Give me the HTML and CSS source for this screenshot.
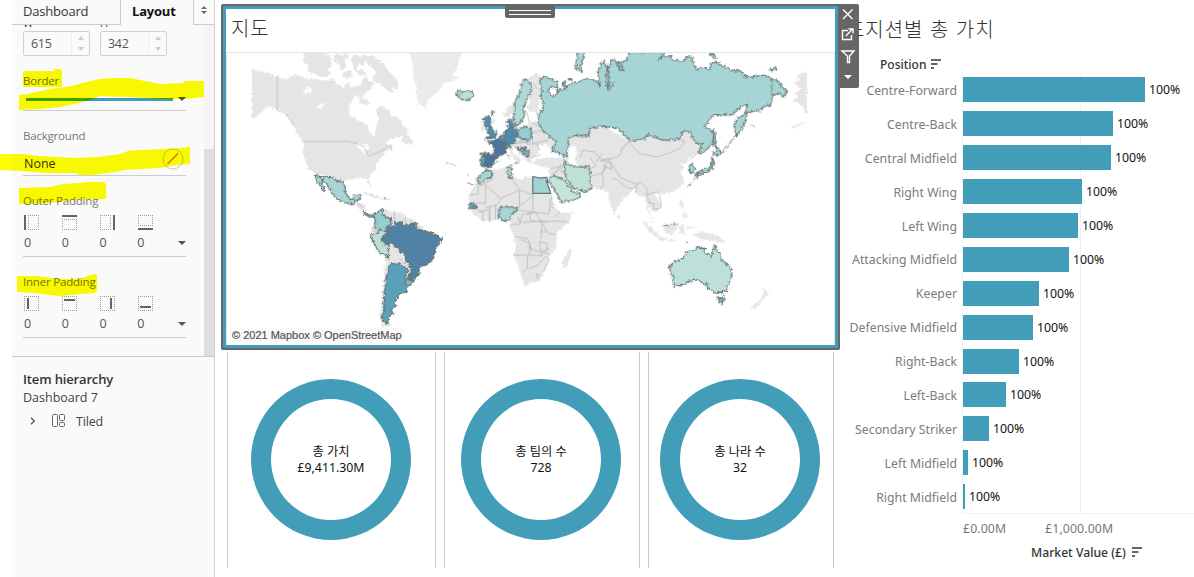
FILE: index.html
```html
<!DOCTYPE html>
<html lang="ko">
<head>
<meta charset="utf-8">
<title>Dashboard 7</title>
<link rel="stylesheet" href="styles.css">
</head>
<body>
<div class="app">
  <aside class="panel">
    <nav class="tabs">
      <div class="tab">Dashboard</div>
      <div class="tab active">Layout</div>
      <div class="tab-toggle"><svg width="8" height="10" viewBox="0 0 8 10"><path d="M1 4L4 1l3 3zM1 6l3 3 3-3z"/></svg></div>
    </nav>
    <div class="scroller">
      <div class="props">
        <div class="size-labels"><span>W</span><span>H</span></div>
        <div class="sizes">
          <div class="num"><span>615</span><div class="steps"><i class="up"></i><i class="down"></i></div></div>
          <div class="num"><span>342</span><div class="steps"><i class="up"></i><i class="down"></i></div></div>
        </div>
        <div class="label border-label">Border</div>
        <div class="field border-field"><b class="swatch"></b><i class="caret"></i></div>
        <div class="label bg-label">Background</div>
        <div class="field bg-field"><span>None</span><svg width="22" height="22" viewBox="0 0 22 22"><circle cx="11" cy="11" r="10" fill="none" stroke="#c9c9c9"/><path d="M5.500 16L16 5.500" stroke="#e2703a" stroke-width="1.500"/></svg></div>
        <div class="label outer-label">Outer Padding</div>
        <div class="pads">
          <svg width="16" height="16"><path class="dots" d="M4 .5h11M4 14.500h11M4.500 0v15M14.500 0v15"/><path class="thick" d="M1 0v15"/></svg>
          <svg width="16" height="16"><path class="dots" d="M0 4.500h15M0 14.500h15M.5 4v11M14.500 4v11"/><path class="thick" d="M0 1h15"/></svg>
          <svg width="16" height="16"><path class="dots" d="M0 .5h11M0 14.500h11M.5 0v15M10.500 0v15"/><path class="thick" d="M14 0v15"/></svg>
          <svg width="16" height="16"><path class="dots" d="M0 .5h15M0 10.500h15M.5 0v11M14.500 0v11"/><path class="thick" d="M0 14h15"/></svg>
        </div>
        <div class="field pad-field"><span>0</span><span>0</span><span>0</span><span>0</span><i class="caret"></i></div>
        <div class="label inner-label">Inner Padding</div>
        <div class="pads">
          <svg width="16" height="16"><path class="dots" d="M0 .5h15M0 14.500h15M.5 0v15M14.500 0v15"/><path class="thick" d="M4 2v11"/></svg>
          <svg width="16" height="16"><path class="dots" d="M0 .5h15M0 14.500h15M.5 0v15M14.500 0v15"/><path class="thick" d="M2 4h11"/></svg>
          <svg width="16" height="16"><path class="dots" d="M0 .5h15M0 14.500h15M.5 0v15M14.500 0v15"/><path class="thick" d="M11 2v11"/></svg>
          <svg width="16" height="16"><path class="dots" d="M0 .5h15M0 14.500h15M.5 0v15M14.500 0v15"/><path class="thick" d="M2 11h11"/></svg>
        </div>
        <div class="field pad-field"><span>0</span><span>0</span><span>0</span><span>0</span><i class="caret"></i></div>
      </div>
      <div class="track"><div class="thumb"></div></div>
    </div>
    <section class="hierarchy">
      <h2>Item hierarchy</h2>
      <p>Dashboard 7</p>
      <div class="node">
        <svg width="6" height="8" viewBox="0 0 6 8"><path d="M1 .7L4.300 4 1 7.300" fill="none" stroke="#555" stroke-width="1.300"/></svg>
        <svg class="tile-icon" width="14" height="14" viewBox="0 0 14 14" fill="none" stroke="#666"><rect x=".5" y=".5" width="5" height="12" rx="1"/><rect x="7.500" y=".5" width="5" height="6" rx="1"/><rect x="7.500" y="8.500" width="5" height="4" rx="1"/></svg>
        <span>Tiled</span>
      </div>
    </section>
  </aside>

  <main class="canvas">
    <section class="map-card">
      <h1>지도</h1>
      <div class="map">
      <svg class="world" viewBox="227 53 608 292" width="608" height="292">
        <defs>
          <!-- Roughens the outlines so that coasts look natural -->
          <filter id="coast" filterUnits="userSpaceOnUse" x="227" y="53" width="608" height="292" color-interpolation-filters="sRGB">
            <feTurbulence type="fractalNoise" baseFrequency=".35" numOctaves="2" seed="4" result="n"/>
            <feDisplacementMap in="SourceGraphic" in2="n" scale="5" xChannelSelector="R" yChannelSelector="G"/>
          </filter>
        </defs>
        <g filter="url(#coast)">
        <!-- North America and the Arctic -->
        <g class="land" transform="translate(220 0) scale(.33333)">
          <path d="M96 208L130 214 172 228 200 238 222 224 240 226 255 235 290 238 312 243 340 234 348 252 368 258 385 246 395 262 420 254 430 238 440 224 445 240 462 245 456 262 440 276 425 290 405 288 390 312 388 335 396 350 420 362 445 376 448 396 463 410 466 382 478 362 468 328 485 318 508 330 515 348 534 350 550 375 565 392 562 402 540 410 512 415 492 432 515 433 520 443 498 455 486 472 468 488 470 506 452 524 448 540 454 556 450 562 440 535 415 532 405 536 375 540 372 548 340 545 330 530 286 522 268 508 256 484 250 462 252 425 238 412 224 380 205 352 188 332 172 328 150 318 132 324 120 340 96 362Z"/>
          <path d="M252 150L300 150 330 168 338 195 322 206 335 222 308 232 285 222 262 212 268 195 250 188ZM345 160l20 5 12-7 10 10-14 12 10 20-20 10-8-20-14-6zM395 170l14-10 12 10 10-6 5 15-8 18-12-6-6 20 18-2 12 14-20 4-18-20zM430 166l30-2 14 15 18 12 15 22 20 18 12 25-10 12-14-10 8 20-20-5-22-22-18-5-8-14 14-10-10-20-22-15zM420 290l20 8 14 14-20 2-16-8zM560 400l20 20-6 15-20-5-12-6zM370 215l20-6 10 18-14 10-18-6z"/>
          <path class="ice" d="M567 150L580 188 580 230 592 262 588 280 600 315 618 326 626 298 640 285 660 270 672 250 718 236 698 222 715 205 718 182 730 150Z"/>
          <path class="lake" d="M248 270l15-8 18 6-8 10-20 3zM286 322l20-12 12 2-20 14zM415 428l30 8 6 6-14 6 4 20-10-12-18-15z"/>
        </g>
        <!-- Central and South America -->
        <g class="land" transform="translate(220 170) scale(.33333)">
          <path d="M400 103L412 96 438 106 434 124 462 138 452 140 428 124ZM435 66l30 8 16 8-12 4-38-14zM488 84l24 1-2 6-24-2zM485 122L500 120 545 128 560 142 585 152 600 160 612 180 520 290 506 262 480 190 456 190 455 174 468 158ZM498 260L506 262 520 284 502 330 494 430 488 440 492 456 510 470 484 470 482 430 488 360ZM506 230L520 222 572 285 572 306 560 302 556 285 510 282Z"/>
        </g>
        <!-- Europe and Africa -->
        <g class="land" transform="translate(440 60) scale(.33333)">
          <path d="M192 162L205 140 220 132 248 75 262 58 285 38 302 45 302 80 315 100 300 115 295 175 308 200 262 196 278 184 294 180 292 160 272 155 262 148 270 120 270 100 260 130 245 165 232 200 220 160 205 172 194 170ZM128 172L165 175 160 195 124 215ZM205 195L230 200 260 195 300 190 318 210 350 238 345 260 330 265 320 250 295 262 300 278 278 295 272 312 258 300 240 280 225 262 215 265 232 285 244 300 232 310 222 292 205 268 180 280 160 275Z"/>
          <path d="M285 300L310 292 360 294 385 290 395 318 370 318 335 325 300 318 280 310Z"/>
          <path d="M328 325L395 310 395 360 376 362 342 346 330 352Z"/>
          <path d="M155 328L212 320 218 345 245 362 256 350 300 350 326 353 335 400 350 445 365 458 402 454 388 488 350 520 352 560 330 590 320 625 300 660 270 674 252 674 244 640 222 585 230 555 224 530 210 505 212 485 190 480 130 484 100 462 86 440 88 400 105 378 140 345Z"/>
          <path d="M392 565L398 570 384 622 370 626 368 605 382 580Z"/>
        </g>
        <!-- Asia and Oceania -->
        <g class="land" transform="translate(570 120) scale(.33333)">
          <path d="M0 58L25 45 65 30 100 14 135 38 182 62 240 46 330 56 350 30 382 65 400 72 384 100 358 118 350 132 330 126 345 146 332 156 344 175 336 198 320 210 300 218 278 222 262 214 254 222 278 252 262 276 248 268 238 258 244 290 256 310 248 304 232 262 228 232 205 226 196 205 160 240 144 262 136 286 122 250 115 215 100 210 62 202 20 185 0 175Z"/>
          <path class="lake" d="M0 80l18-6 5 30-8 10 12 28-27-4z"/>
          <path d="M145 282l8 6-2 8-6-4zM220 300l18 15 35 35-12 2-28-25zM262 350l58 10-2 4-54-6zM284 318l28-4 10-10 4 12-16 28-16-2-10-10zM332 320l14-10-4 14 8 20-18-4zM375 340l25-4 32 6 26 12 10 16-44-10-28-2-22-12zM332 235l12 20-4 14-12-16zM348 268l8 25-14-2zM352 320l28 2-2 4-26-2z"/>
        </g>
        <g class="land" transform="translate(530 0) scale(.33333)">
          <path d="M834 212L822 216 806 228 810 240 796 250 815 262 810 272 794 282 808 290 792 298 815 314 834 345ZM786 382l48-20-38 24z"/>
        </g>
        <g class="land" transform="translate(530 170) scale(.33333)">
          <path d="M704 350l5 12 12 3-16 20-26 32-12 0 8-14 22-16 8-20z"/>
        </g>
        </g>
        <!-- Borders between countries without data -->
        <g class="land" transform="translate(220 0) scale(.33333)">
          <path class="line" d="M172 228V330L196 338 210 358 224 380M247 424H385L412 430 432 440 446 468 480 455 512 435 515 452"/>
        </g>
        <g class="land" transform="translate(220 170) scale(.33333)">
          <path class="line" d="M524 126v40M556 140l2 30M574 148v20M540 265l30 38M508 230l-2 40M410 98l20 14M455 175l15 14"/>
        </g>
        <g class="land" transform="translate(440 60) scale(.33333)">
          <path class="line" d="M106 372h32v58H92M90 403h26v-24M138 376l47 40-14 20-33 6M160 332l-4 28-40 18M185 415l55-25-30-45M240 392v48l-8 10M240 390l40 15v-52M280 400v52l-18 14M236 442l44-34M106 444l24 14v26M120 456l30-8v36M150 440v44M168 436v44M210 440M235 450l45 6 48 6 8-52M235 470l8 22-34 2M242 488l8-26 38-4 20 30-4 50M225 530l40 6 12 40M270 458l4 25 50 2M300 486l46-3 36 2M250 488l58-6M308 490l18 30 24 4M302 515h22M222 585l86 2M244 540l28 10-4 36M264 588v38l-20 14M298 545l24 5 2 18-26 8-30-15M300 590l30-26M268 625l26-8 25-28 10 12-18 35M292 642l8 3-4 11-6-4zM302 545v30l28 8M326 425l14 20M345 470l16-12"/>
          <path class="line" d="M275 200l5 50 45-10M278 218l35-10M262 252l30-2 8 20M225 250l50-6M228 262l30 4M277 290l28-6M370 296l26 22M334 326l20-4 18-5M335 345l20-15 8-15M360 320l25 30M340 350l16-22 40 28M226 240l40 10"/>
          <path class="line" d="M282 72l12 14M262 155l8 34M278 190l26 7"/>
        </g>
        <g class="land" transform="translate(570 120) scale(.33333)">
          <path class="line" d="M32 112l8-22 35 6 18 20 22 5 36-14 8-20 20-24 15 22 20 16 50 10 36-12 32-14 15-20-15-6M182 62l-30 30M92 122l32 5 12 20 18 26 46 20-8 14-20-5-30-24-14-2M110 130l-12 30 5 30-8 18M60 170l40-12 12-20M95 122l24-8 8 34-28-14M200 193l12-8 20 18 4 20 32-8 6 28 2 20-24 6 2-18-18-4M205 190l-6 28M230 218l12 34M62 112l18 25-18 10M100 100l-20 25M384 100l-22 20"/>
        </g>
        <!-- Countries with data -->
        <g filter="url(#coast)">
        <g class="country" transform="translate(530 0) scale(.33333)">
          <path fill="#a7d5d6" d="M300 156L410 156 385 180 405 168 424 166 432 180 452 182 464 180 470 170 490 172 495 194 502 210 514 200 542 208 545 186 568 188 582 198 602 208 618 212 634 212 648 230 672 230 684 224 712 226 730 236 748 242 762 264 776 270 764 290 750 282 730 284 726 312 708 318 690 332 654 336 650 360 632 395 620 408 616 380 624 355 648 340 656 312 630 324 610 344 552 344 526 380 548 392 556 405 548 435 530 450 512 464 508 458 520 432 500 430 480 395 462 392 448 418 400 420 358 404 342 418 302 422 264 384 214 378 182 386 178 408 138 406 116 416 118 440 110 450 118 472 92 462 68 452 80 426 40 392 26 366 28 344 42 320 34 284 38 270 30 240 45 228 82 244 86 262 60 262 56 274 72 290 84 280 82 272 102 268 98 250 114 256 128 250 178 234 204 246 212 262 206 210 224 178 234 200 230 230 236 268 240 250 236 210 248 178 270 186 284 212 270 206 262 190 292 180Z"/>
          <path fill="#a7d5d6" d="M146 152L168 152 154 196 158 214 138 206 140 186ZM722 208l18-5-6 10zM542 160l8 14 12 0-10-14zM118 236l10 0-4 6zM100 250l8-6 2 22-8-4z"/>
          <path fill="#a7d5d6" d="M552 386l6 16 0 26 10 18-8-2-8-12zM552 456l14-4 16 4-16 12-12-4z"/>
          <path fill="#a5d8d3" d="M548 470l6 14-6 24-12 6-16 6-16 6 4-10 20-10 16-4 4-16zM502 516l8 6-6 10-6-8zM482 494l10-4 4 16-4 12-10 0-4-10z"/>
          <path class="trail" d="M570 464l32-34 22-32M662 374l14 8M500 530l-10 18-16 14M728 236v48M236 200l-2 60 6 10 16-28"/>
          <path fill="#bde1d6" d="M102 484l16 12 42 6 18-4 4 24 0 24 6 16-16 14-40-10-22-32z"/>
        </g>
        <g class="country" transform="translate(220 0) scale(.33333)">
          <path fill="#bde1dc" d="M713 275l10-6 2 10 20-8 14 4 4 12-12 10-14 4-14-4-6-10-8-4z"/>
          <path fill="#afdad8" d="M920 238l14 12 2 22-16 30-8 24 2 22-14 24-12 4-8-20 6-30 0-22 14-25 4-22 10-18z"/>
        </g>
        <g class="country" transform="translate(440 60) scale(.33333)">
          <path fill="#4f8db1" d="M132 174L148 168 154 184 148 190 160 208 172 220 166 232 136 238 150 226 140 214 150 204 132 195 138 184 128 180ZM156 156l6-6-4 16zM202 184l14-6 2 14 8 8-10 6-10-8z"/>
          <path fill="#4b739c" d="M178 232L202 244 198 262 200 278 180 286 162 280 164 260 145 246 160 246 164 238 172 240Z"/>
          <path fill="#5189ad" d="M198 212L212 202 228 206 234 222 230 232 224 250 204 254 196 240 196 224Z"/>
          <path fill="#4b739c" d="M124 280L146 280 180 288 164 300 162 312 152 322 136 322 130 316 136 290Z"/>
          <path fill="#5aaabc" d="M124 290h12l-4 28-8 0zM178 232l12-8 6 12-2 8zM198 258l12-2 4 6-14 4z"/>
          <path fill="#96cdd1" d="M234 208L256 200 272 204 276 224 270 242 246 238 236 228Z"/>
          <path fill="#72bcc4" d="M230 264l10 2 4 8 16 12-8-4-14-10zM256 262l10 8 2 18-6 4-8-12zM242 262l12 2 2 10z"/>
          <path fill="#a7d5d6" d="M118 370L112 358 124 342 140 330 154 332 160 345 154 352 138 358 124 370Z"/>
          <path fill="#bde1d6" d="M204 322l8-4 4 10-2 10 4 6-6 12-8-14z"/>
          <path fill="#a7d5d6" d="M182 440l50 2 0 8-16 14-6 16-16 4-18-14z"/>
          <path fill="#5aaabc" d="M88 434l12-6 12 16-12 2-12-4z"/>
          <path fill="#c3e6d8" d="M330 352L342 346 376 362 390 380 400 396 422 402 422 410 404 420 364 426 352 400 342 386 330 366Z"/>
          <path class="trail" d="M20 310l6-2M32 312l4 2M44 312l2 4M82 368l6 2 16 2M84 344l4 0M168 308l8-6M182 302l4-2M206 284l2 10M226 308l12 2M94 438l16 0"/>
        </g>
        <g class="country" transform="translate(220 170) scale(.33333)">
          <path fill="#a7d5d6" d="M284 14L300 20 334 20 352 34 362 32 376 50 376 70 392 88 402 88 404 74 424 74 418 90 405 94 400 104 378 98 350 86 338 72 328 52 308 28 306 38 316 60 312 64 296 40 290 32Z"/>
          <path fill="#96cdd1" d="M462 138L476 124 492 118 488 134 512 146 514 166 502 172 500 188 480 178 464 176 468 158ZM428 124l12 6 10 6 14-4-2 8-12 2-14-8z"/>
          <path fill="#bde1d6" d="M450 196L474 190 482 180 500 188 486 204 490 218 506 222 506 262 476 246 464 222Z"/>
          <path fill="#5182a5" d="M502 172L526 168 528 158 546 154 550 168 586 158 594 176 624 186 662 200 666 212 648 232 642 262 634 280 602 290 598 310 580 336 564 320 574 304 572 286 558 276 556 256 520 222 492 222 484 206 502 194Z"/>
          <path fill="#5aa0b8" d="M514 282L534 280 556 292 564 304 556 322 562 350 560 366 536 374 534 384 524 394 528 408 514 422 522 430 506 444 504 460 492 456 484 442 492 426 494 370 500 324 508 290Z"/>
          <path fill="#72bcc4" d="M562 322l18 14-4 10-16 0-4-10z"/>
          <path class="trail" d="M492 456l14 4 4 10M492 84h6"/>
        </g>
        <g class="country" transform="translate(530 170) scale(.33333)">
          <path fill="#bde1da" d="M420 288L436 276 464 262 468 252 484 240 494 244 504 230 528 236 524 246 546 258 556 226 564 244 572 248 574 264 590 280 606 296 608 316 600 340 592 362 560 370 544 360 532 350 536 338 524 344 508 330 480 334 466 342 434 350 430 320 424 308Z"/>
          <path fill="#72bcc4" d="M566 380l10 6 8-6 0 12-8 10-6-8z"/>
          <path class="trail" d="M402 168l30-6 6-10M432 154l10 12M470 216l8 2M526 340l8 14M562 370l20 2"/>
        </g>
        </g>
        <g class="country" transform="translate(440 60) scale(.33333)">
          <path fill="#9fd3d5" d="M280 350l20 4 22-2 4 16-6-6 14 38h-54z"/>
        </g>
      </svg>
      <div class="credit">© 2021 Mapbox © OpenStreetMap</div>
      </div>
      <div class="handle"></div>
    </section>
    <div class="toolbar">
      <svg width="21" height="84" viewBox="0 0 21 84" fill="none" stroke="#fff" stroke-width="1.400"><path d="M5 5.500l9.500 9.500M14.500 5.500l-9.500 9.500M10 26.500H4.500v9h9V31M8 32l6.500-7M10.500 25H15v4.500M4 47h12L11.500 52v6.500h-2V52z"/><path d="M6 71h8l-4 4z" fill="#fff" stroke="none"/></svg>
    </div>
    <div class="donuts">
      <div class="cell c1"><div class="ring"><span>총 가치</span><span>£9,411.30M</span></div></div>
      <div class="cell c2"><div class="ring"><span>총 팀의 수</span><span>728</span></div></div>
      <div class="cell c3"><div class="ring"><span>총 나라 수</span><span>32</span></div></div>
    </div>
  </main>

  <section class="chart">
    <h1>포지션별 총 가치</h1>
    <div class="head">Position<svg class="sort" width="10" height="10"><path d="M0 1h10M0 5h6.500M0 9h3"/></svg></div>
    <div class="plot">
      <div class="row"><label>Centre-Forward</label><b style="width:182px"></b><span>100%</span></div>
      <div class="row"><label>Centre-Back</label><b style="width:150px"></b><span>100%</span></div>
      <div class="row"><label>Central Midfield</label><b style="width:148px"></b><span>100%</span></div>
      <div class="row"><label>Right Wing</label><b style="width:119px"></b><span>100%</span></div>
      <div class="row"><label>Left Wing</label><b style="width:115px"></b><span>100%</span></div>
      <div class="row"><label>Attacking Midfield</label><b style="width:106px"></b><span>100%</span></div>
      <div class="row"><label>Keeper</label><b style="width:76px"></b><span>100%</span></div>
      <div class="row"><label>Defensive Midfield</label><b style="width:70px"></b><span>100%</span></div>
      <div class="row"><label>Right-Back</label><b style="width:56px"></b><span>100%</span></div>
      <div class="row"><label>Left-Back</label><b style="width:43px"></b><span>100%</span></div>
      <div class="row"><label>Secondary Striker</label><b style="width:26px"></b><span>100%</span></div>
      <div class="row"><label>Left Midfield</label><b style="width:5px"></b><span>100%</span></div>
      <div class="row"><label>Right Midfield</label><b style="width:2px"></b><span>100%</span></div>
    </div>
    <div class="ticks"><span>£0.00M</span><span>£1,000.00M</span></div>
    <div class="axis">Market Value (£)<svg class="sort" width="10" height="10"><path d="M0 1h10M0 5h6.500M0 9h3"/></svg></div>
  </section>

  <!-- Highlighter marks over the layout panel -->
  <svg class="marker" width="215" height="300" viewBox="0 0 215 300">
    <path d="M23 71H54V69H60L62 71V86L60 87H23Z"/>
    <path d="M19 95L28 94 50 89 72 86 82 83 100 79 113 78 130 78 140 80 160 84 183 83 184 81H204V97L185 99 160 99 130 97 100 96 90 100 75 104 60 107 40 109 19 110Z"/>
    <path d="M0 154H22L40 156 75 158 98 157 120 154 128 151 140 150 165 149 180 148 190 147V164L176 165 160 168 140 169 125 170 115 172 92 175H80L75 173 45 173 22 171 0 170Z"/>
    <path d="M19 188L50 187 62 184 80 183 88 182H104L106 184V199H80L65 201 50 203 19 204Z"/>
    <path d="M17 276H35L60 279 80 279 90 275 97 274V291L95 293 80 294 60 296 50 295 35 293 17 292Z"/>
  </svg>
</div>
</body>
</html>
```

FILE: styles.css
```css
* { box-sizing: border-box; }
body {
  margin: 0;
  background: #fff;
  font-family: "Open Sans", "Noto Sans", "Noto Sans CJK KR", sans-serif;
  font-size: 13px;
  color: #333;
}
h1, h2, p { margin: 0; font-weight: 400; }
.app { position: relative; width: 1194px; height: 577px; display: flex; padding-left: 12px; overflow: hidden; }
svg { display: block; flex: none; }

/* Layout panel */
.panel { width: 203px; height: 577px; flex: none; background: #fafafa; border-right: 1px solid #d0d0d0; font-size: 13px; }
.tabs { display: flex; height: 25px; line-height: 22px; }
.tab { width: 109px; padding-left: 11px; border-right: 1px solid #ccc; border-bottom: 1px solid #ccc; letter-spacing: -.2px; }
.tab.active { width: 73px; border-bottom: 0; font-weight: 700; color: #111; letter-spacing: -.2px; }
.tab-toggle { flex: 1; display: flex; justify-content: center; padding-top: 5px; border-bottom: 1px solid #ccc; }
.tab-toggle path { fill: #666c75; }
.scroller { display: flex; height: 331px; overflow: hidden; }
.props { width: 192px; padding: 0 18px 0 11px; }
.track { width: 10px; background: #f5f5f5; padding-top: 124px; }
.thumb { height: 207px; background: #dedede; }
.size-labels { display: flex; height: 6px; line-height: 12px; align-items: flex-end; font-size: 11px; }
.size-labels span { width: 77px; height: 14px; }
.sizes { display: flex; gap: 10px; }
.num { display: flex; justify-content: space-between; width: 67px; height: 25px; border: 1px solid #d0d0d0; border-radius: 2px; padding-left: 7px; line-height: 24px; color: #555; font-size: 12.5px; letter-spacing: -.3px; }
.steps { width: 18px; border-left: 1px solid #eee; display: flex; flex-direction: column; align-items: center; justify-content: space-between; padding: 4px 0; }
.up, .down { border: 3px solid transparent; }
.up { border-top: 0; border-bottom: 4px solid #ccc; }
.down { border-bottom: 0; border-top: 4px solid #ccc; }
.label { height: 18px; line-height: 18px; font-size: 11.5px; color: #777; letter-spacing: -.2px; white-space: nowrap; }
.field { display: flex; align-items: center; width: 163px; border-bottom: 1px solid #ccc; }
.caret { border: 4px solid transparent; border-top-color: #555; border-bottom: 0; width: 8px; height: 4px; }
.border-label { margin-top: 16px; }
.border-field { height: 21px; padding: 0 0 1px 3px; gap: 5px; }
.border-field .caret { margin-bottom: 1px; }
.swatch { width: 148px; height: 3px; background: #429db8; }
.bg-label { margin-top: 16px; }
.bg-field { height: 31px; justify-content: space-between; padding: 0 2px 1px 1px; font-size: 12.5px; }
.bg-field span { padding-top: 8px; }
.bg-field svg { margin-top: -2px; }
.outer-label { margin-top: 16px; height: 19px; }
.inner-label { margin-top: 16px; height: 23px; }
.pads { display: flex; gap: 22px; padding-left: 1px; margin-top: 4px; height: 16px; }
.inner-label + .pads { margin-top: 0; }
.pad-field { height: 26px; padding: 0 0 2px 1px; font-size: 12.5px; color: #555; }
.pad-field span { width: 38px; }
.pad-field .caret { margin: 1px 0 0 3px; }
.dots { fill: none; stroke: #9c9c9c; stroke-dasharray: 1 1; shape-rendering: crispEdges; }
.thick { fill: none; stroke: #666; stroke-width: 2; }
.hierarchy { border-top: 1px solid #ccc; padding: 12px 0 0 11px; }
.hierarchy h2 { font-size: 13px; line-height: 20px; font-weight: 600; letter-spacing: -.15px; }
.hierarchy p { line-height: 18px; font-size: 12.5px; color: #444; }
.node { display: flex; align-items: center; height: 28px; padding-left: 7px; font-size: 12.5px; color: #444; }
.node span { letter-spacing: -.15px; }
.tile-icon { margin-left: 16px; margin-right: 10px; }

/* Map card */
.canvas { position: relative; width: 625px; flex: none; padding: 4px 0 0 6px; }
.map-card { position: relative; width: 619px; height: 346px; border: 2px solid #666; border-radius: 2px; box-shadow: inset 0 0 0 3px #429db8; padding: 3px; }
h1 { font-family: "Noto Sans CJK KR", sans-serif; font-weight: 300; }
.map-card h1 { height: 44px; padding: 1px 0 0 5px; line-height: 36px; font-size: 20px; border-bottom: 1px solid #e3e3e3; letter-spacing: .8px; }
.map { position: relative; height: 292px; border: solid #e6e6e6; border-width: 0 1px; }
.world { width: 607px; height: 292px; }
.land path { fill: #e5e5e5; }
.land .ice { fill: #ebebeb; }
.land .lake { fill: #fff; }
.land .line { fill: none; stroke: #b8b8b8; stroke-width: 2.4; }
.country path { stroke: #657476; stroke-width: 3.6; stroke-linejoin: round; }
.country .trail { fill: none; stroke-width: 2.6; }
.credit { position: absolute; left: 3px; bottom: 3px; padding: 0 3px 0 2px; background: #fafafa; font: 11px/14px "Liberation Sans", Arial, sans-serif; color: #555; white-space: nowrap; -webkit-text-stroke: .2px #555; }
.handle { position: absolute; left: 282px; top: -2px; width: 50px; height: 14px; background: linear-gradient(#fff, #fff) 4px 6px / 42px 1px no-repeat, linear-gradient(#fff, #fff) 4px 10px / 42px 1px no-repeat, #666; border-radius: 0 0 2px 2px; }
.toolbar { position: absolute; left: 623px; top: 4px; z-index: 3; width: 21px; height: 84px; background: #666; border-radius: 0 2px 2px 0; }

/* Donuts */
.donuts { display: flex; gap: 8px; padding: 2px 0 0 6px; }
.cell { height: 216px; border: solid #c8c8c8; border-width: 0 1px; padding-top: 27px; }
.c1 { width: 209px; padding-left: 23px; }
.c2 { width: 196px; padding-left: 16px; }
.c3 { width: 186px; padding-left: 11px; }
.ring { width: 160px; height: 161px; border: 20px solid #429db8; border-radius: 50%; display: flex; flex-direction: column; align-items: center; justify-content: center; font: 12.3px/16px "Noto Sans", "Noto Sans CJK KR", sans-serif; color: #111; white-space: nowrap; }

/* Bar chart */
.chart { width: 354px; flex: none; padding-top: 14px; font-family: "Noto Sans", sans-serif; font-size: 12.3px; }
.chart h1 { height: 43px; padding: 1px 0 0 6px; line-height: 28px; font-size: 20px; letter-spacing: .95px; white-space: nowrap; }
.head { display: flex; height: 16px; line-height: 15px; padding-left: 40px; font-size: 12px; font-weight: 500; }
.sort { margin: 2px 0 0 5px; fill: none; stroke: #666; stroke-width: 2; }
.plot { height: 441px; display: grid; grid-template-rows: repeat(13, 33.9px); background: linear-gradient(#f0f0f0, #f0f0f0) 122px 0 / 1px 100% no-repeat, linear-gradient(#f0f0f0, #f0f0f0) 240px 0 / 1px 100% no-repeat, linear-gradient(#f0f0f0, #f0f0f0) 122px 100% / 240px 1px no-repeat; }
.row { display: flex; align-items: center; height: 33.9px; white-space: nowrap; }
.row label { width: 123px; padding: 1px 6px 0 0; text-align: right; color: #7b7b7b; letter-spacing: .02px; }
.row b { height: 25px; background: #429db8; }
.row span { padding-left: 4px; color: #111; }
.ticks { display: flex; justify-content: flex-start; gap: 39px; height: 28px; padding: 6px 0 0 123px; line-height: 17px; color: #777; letter-spacing: .1px; }
.axis { display: flex; padding-left: 191px; height: 20px; line-height: 21px; font-size: 12.2px; font-weight: 500; }
.axis .sort { margin-top: 5px; margin-left: 6px; }

.marker { position: absolute; left: 0; top: 0; fill: #fdfd00; mix-blend-mode: multiply; pointer-events: none; }
```
